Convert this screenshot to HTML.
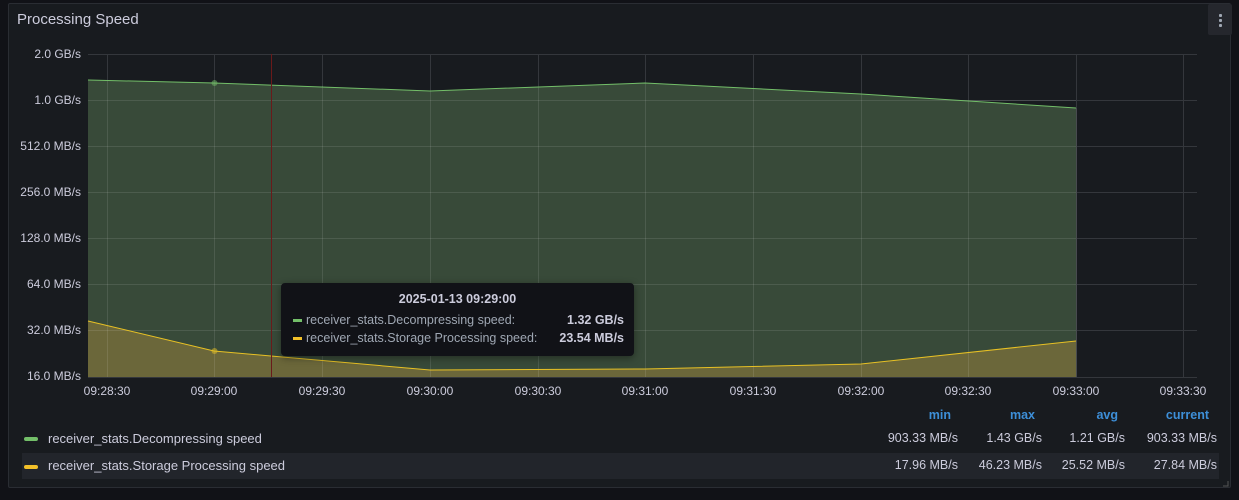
<!DOCTYPE html>
<html><head><meta charset="utf-8"><style>
html,body{margin:0;padding:0;background:#111217;width:1239px;height:500px;overflow:hidden;font-family:"Liberation Sans",sans-serif;}
.panel{position:absolute;left:8px;top:3px;width:1223px;height:485px;background:#181b1f;border:1px solid #2a2d33;border-radius:2px;box-sizing:border-box;}
.title{position:absolute;left:17px;top:11px;color:#ccccdc;font-size:15px;}
.menu{position:absolute;left:1208px;top:4px;width:24px;height:31px;background:#25272d;border-radius:2px;}
.menu i{position:absolute;left:11px;width:3px;height:3px;background:#9fa7b3;border-radius:1px;}
.ax{position:absolute;color:#ccccdc;font-size:12px;white-space:nowrap;}
.yl{right:1158px;text-align:right;}
.xl{transform:translateX(-50%);top:384px;}
.tip{position:absolute;left:281px;top:283px;width:353px;height:73px;background:#111217;border-radius:4px;box-shadow:0 2px 8px rgba(0,0,0,.4);color:#ccccdc;font-size:12.5px;}
.leg{position:absolute;font-size:13px;color:#ccccdc;}
.hd{position:absolute;top:408px;color:#3d8fd8;font-weight:bold;font-size:12.5px;text-align:right;}
.v{position:absolute;text-align:right;font-size:12.5px;color:#ccccdc;}
</style></head><body>
<div class="panel"></div>
<div class="title">Processing Speed</div>
<div class="menu"><i style="top:10px"></i><i style="top:15px"></i><i style="top:20px"></i></div>
<svg width="1239" height="500" style="position:absolute;left:0;top:0">
<g stroke="#34373c" stroke-width="1">
<line x1="88" y1="54.5" x2="1197" y2="54.5"/><line x1="88" y1="100.5" x2="1197" y2="100.5"/><line x1="88" y1="146.5" x2="1197" y2="146.5"/><line x1="88" y1="192.5" x2="1197" y2="192.5"/><line x1="88" y1="238.5" x2="1197" y2="238.5"/><line x1="88" y1="284.5" x2="1197" y2="284.5"/><line x1="88" y1="330.5" x2="1197" y2="330.5"/><line x1="88" y1="377.5" x2="1197" y2="377.5"/>
<line x1="107.5" y1="54" x2="107.5" y2="377"/><line x1="214.5" y1="54" x2="214.5" y2="377"/><line x1="322.5" y1="54" x2="322.5" y2="377"/><line x1="430.5" y1="54" x2="430.5" y2="377"/><line x1="538.5" y1="54" x2="538.5" y2="377"/><line x1="645.5" y1="54" x2="645.5" y2="377"/><line x1="753.5" y1="54" x2="753.5" y2="377"/><line x1="861.5" y1="54" x2="861.5" y2="377"/><line x1="968.5" y1="54" x2="968.5" y2="377"/><line x1="1076.5" y1="54" x2="1076.5" y2="377"/><line x1="1183.5" y1="54" x2="1183.5" y2="377"/>
</g>
<polygon points="88,80 214,83 430,91 645,83 861,94 1076,108 1076,377 88,377" fill="#384a39"/>
<polygon points="88,321 214,351 430,370 645,369 861,364 1076,341 1076,377 88,377" fill="#6b673a"/>
<g stroke="#ffffff" stroke-opacity="0.1">
<line x1="88" y1="100.5" x2="1076" y2="100.5"/><line x1="88" y1="146.5" x2="1076" y2="146.5"/><line x1="88" y1="192.5" x2="1076" y2="192.5"/><line x1="88" y1="238.5" x2="1076" y2="238.5"/><line x1="88" y1="284.5" x2="1076" y2="284.5"/><line x1="88" y1="330.5" x2="1076" y2="330.5"/>
<line x1="107.5" y1="80" x2="107.5" y2="377"/><line x1="214.5" y1="83" x2="214.5" y2="377"/><line x1="322.5" y1="86" x2="322.5" y2="377"/><line x1="430.5" y1="91" x2="430.5" y2="377"/><line x1="538.5" y1="87" x2="538.5" y2="377"/><line x1="645.5" y1="83" x2="645.5" y2="377"/><line x1="753.5" y1="88" x2="753.5" y2="377"/><line x1="861.5" y1="94" x2="861.5" y2="377"/><line x1="968.5" y1="100" x2="968.5" y2="377"/><line x1="1076.5" y1="108" x2="1076.5" y2="377"/>
</g>
<polyline points="88,80 214,83 430,91 645,83 861,94 1076,108" fill="none" stroke="#73bf69" stroke-width="1"/>
<polyline points="88,321 214,351 430,370 645,369 861,364 1076,341" fill="none" stroke="#e8c124" stroke-width="1"/>
<circle cx="214.5" cy="83" r="3" fill="#73bf69" fill-opacity="0.5"/>
<circle cx="214.5" cy="351" r="3" fill="#e8c124" fill-opacity="0.5"/>
<line x1="271.5" y1="54" x2="271.5" y2="377" stroke="#6a1a1a" stroke-width="1"/>
<rect x="22" y="453" width="1197" height="26" fill="#22252b"/>
<rect x="24" y="437" width="14" height="4" rx="2" fill="#73bf69"/>
<rect x="24" y="465" width="14" height="4" rx="2" fill="#f2c029"/>
<path d="M1228 481 v5 h-5" stroke="#555" fill="none"/>
</svg>
<div class="ax yl" style="top:47px">2.0 GB/s</div>
<div class="ax yl" style="top:93px">1.0 GB/s</div>
<div class="ax yl" style="top:139px">512.0 MB/s</div>
<div class="ax yl" style="top:185px">256.0 MB/s</div>
<div class="ax yl" style="top:231px">128.0 MB/s</div>
<div class="ax yl" style="top:277px">64.0 MB/s</div>
<div class="ax yl" style="top:323px">32.0 MB/s</div>
<div class="ax yl" style="top:369px">16.0 MB/s</div>
<div class="ax xl" style="left:107px">09:28:30</div>
<div class="ax xl" style="left:214px">09:29:00</div>
<div class="ax xl" style="left:322px">09:29:30</div>
<div class="ax xl" style="left:430px">09:30:00</div>
<div class="ax xl" style="left:538px">09:30:30</div>
<div class="ax xl" style="left:645px">09:31:00</div>
<div class="ax xl" style="left:753px">09:31:30</div>
<div class="ax xl" style="left:861px">09:32:00</div>
<div class="ax xl" style="left:968px">09:32:30</div>
<div class="ax xl" style="left:1076px">09:33:00</div>
<div class="ax xl" style="left:1183px">09:33:30</div>
<div class="tip">
<div style="position:absolute;left:0;right:0;top:9px;text-align:center;font-weight:bold">2025-01-13 09:29:00</div>
<div style="position:absolute;left:12px;top:36px;width:9px;height:3px;background:#73bf69"></div>
<div style="position:absolute;left:25px;top:30px;color:#9fa7b3">receiver_stats.Decompressing speed:</div>
<div style="position:absolute;right:10px;top:30px;font-weight:bold">1.32 GB/s</div>
<div style="position:absolute;left:12px;top:54px;width:9px;height:3px;background:#f2c029"></div>
<div style="position:absolute;left:25px;top:48px;color:#9fa7b3">receiver_stats.Storage Processing speed:</div>
<div style="position:absolute;right:10px;top:48px;font-weight:bold">23.54 MB/s</div>
</div>
<div class="hd" style="right:288px">min</div>
<div class="hd" style="right:204px">max</div>
<div class="hd" style="right:121px">avg</div>
<div class="hd" style="right:30px">current</div>
<div class="leg" style="left:48px;top:431px">receiver_stats.Decompressing speed</div>
<div class="leg" style="left:48px;top:458px">receiver_stats.Storage Processing speed</div>
<div class="v" style="right:281px;top:431px">903.33 MB/s</div>
<div class="v" style="right:197px;top:431px">1.43 GB/s</div>
<div class="v" style="right:114px;top:431px">1.21 GB/s</div>
<div class="v" style="right:22px;top:431px">903.33 MB/s</div>
<div class="v" style="right:281px;top:458px">17.96 MB/s</div>
<div class="v" style="right:197px;top:458px">46.23 MB/s</div>
<div class="v" style="right:114px;top:458px">25.52 MB/s</div>
<div class="v" style="right:22px;top:458px">27.84 MB/s</div>
</body></html>
